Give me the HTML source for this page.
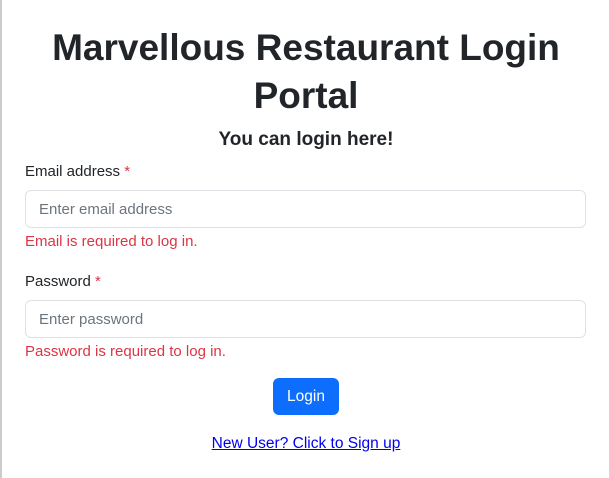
<!DOCTYPE html>
<html><head><style>
body{margin:0;width:609px;height:478px;background:#fff;font-family:"Liberation Sans",sans-serif;color:#212529;position:relative;overflow:hidden}
.bl{position:absolute;left:0;top:0;width:2px;height:478px;background:#ccc}
h1{position:absolute;left:10px;width:592px;top:24px;margin:0;text-align:center;font-size:37px;font-weight:bold;line-height:48px}
h2{position:absolute;left:0;width:612px;top:127px;margin:0;text-align:center;font-size:19px;font-weight:bold;line-height:26px}
.lab{position:absolute;left:25px;font-size:15px}
.lab span{color:#dc3545}
.inp{position:absolute;left:25px;width:559px;height:36px;border:1px solid #dee2e6;border-radius:6px;box-sizing:content-box}
.inp div{position:absolute;left:13px;top:10px;font-size:15px;color:#6c757d}
.err{position:absolute;left:25px;font-size:15px;color:#dc3545}
.btn{position:absolute;left:273px;top:378px;width:66px;height:37px;background:#0d6efd;border-radius:6px;color:#fff;font-size:15.5px;text-align:center;line-height:38px}
a{position:absolute;left:0;width:612px;text-align:center;top:435px;font-size:15.5px;color:#0000ee;text-decoration:underline}
</style></head><body>
<div class="bl"></div>
<h1>Marvellous Restaurant Login Portal</h1>
<h2>You can login here!</h2>
<div class="lab" style="top:163px">Email address <span>*</span></div>
<div class="inp" style="top:190px"><div>Enter email address</div></div>
<div class="err" style="top:233px">Email is required to log in.</div>
<div class="lab" style="top:273px">Password <span>*</span></div>
<div class="inp" style="top:300px"><div>Enter password</div></div>
<div class="err" style="top:343px">Password is required to log in.</div>
<div class="btn">Login</div>
<a>New User? Click to Sign up</a>
</body></html>
